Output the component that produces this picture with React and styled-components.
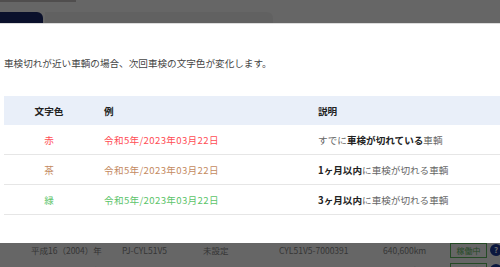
import React from 'react';
import styled, { createGlobalStyle } from 'styled-components';

const GlobalStyle = createGlobalStyle`
  html, body {
    margin: 0;
    padding: 0;
    overflow: hidden;
    background: #fff;
  }
  body {
    font-family: "Noto Sans CJK JP", "Noto Sans", sans-serif;
  }
`;

const vehicles = [
  ['平成16（2004）年', 'PJ-CYL51V5', '未設定', 'CYL51V5-7000391', '640,600km'],
  ['平成27（2015）年', 'EDD-DC16T', '未設定', 'DC16T-105080', '167,204km'],
];

const legend = [
  { name: '赤', color: '#ff4d55', strong: '車検が切れている', before: 'すでに', after: '車輌' },
  { name: '茶', color: '#c48a5f', strong: '1ヶ月以内', before: '', after: 'に車検が切れる車輌' },
  { name: '緑', color: '#5cc46a', strong: '3ヶ月以内', before: '', after: 'に車検が切れる車輌' },
];

function App() {
  return (
    <>
      <GlobalStyle />
      <Page>
        <TopLine />
        <Tabs>
          <Tab active />
          <Tab />
        </Tabs>
        <VehicleList>
          {vehicles.map((r) => (
            <VehicleRow key={r[1]}>
              <span>{r[0]}</span>
              <span>{r[1]}</span>
              <span>{r[2]}</span>
              <span>{r[3]}</span>
              <span>{r[4]}</span>
              <StatusBtn>稼働中</StatusBtn>
              <HelpDot>?</HelpDot>
            </VehicleRow>
          ))}
        </VehicleList>
      </Page>

      <Overlay />

      <Modal>
        <Intro>車検切れが近い車輌の場合、次回車検の文字色が変化します。</Intro>
        <Legend>
          <HeadCell center>文字色</HeadCell>
          <HeadCell>例</HeadCell>
          <HeadCell>説明</HeadCell>
          {legend.map((l) => (
            <React.Fragment key={l.name}>
              <Cell center color={l.color}>{l.name}</Cell>
              <Cell color={l.color} wide>令和5年/2023年03月22日</Cell>
              <Cell color="#666">
                {l.before}
                <b>{l.strong}</b>
                {l.after}
              </Cell>
            </React.Fragment>
          ))}
        </Legend>
      </Modal>
    </>
  );
}

const Page = styled.div`
  width: 500px;
  height: 267px;
  background: #fff;
`;

const TopLine = styled.div`
  width: 76px;
  height: 2px;
  margin-bottom: 10px;
  background: #c9c2c2;
`;

const Tabs = styled.div`
  display: flex;
  gap: 2px;
  height: 12px;
`;

const Tab = styled.div`
  width: ${(p) => (p.active ? '43px' : '228px')};
  border-radius: 0 6px 0 0;
  background: ${(p) => (p.active ? '#1b2a6b' : '#f3f3f3')};
`;

/* rows under the modal are hidden anyway; only the last two peek out */
const VehicleList = styled.div`
  padding-top: 216px;
  display: flex;
  flex-direction: column;
`;

const VehicleRow = styled.div`
  display: grid;
  grid-template-columns: 91px 81px 76px 104px 67px 40px 20px;
  align-items: center;
  height: 20px;
  padding-left: 31px;
  font-size: 8.5px;
  color: #888;
  white-space: nowrap;
`;

const StatusBtn = styled.span`
  width: 35px;
  height: 13px;
  border: 1px solid #5cb85c;
  color: #5cb85c;
  text-align: center;
  line-height: 13px;
  font-size: 8px;
`;

const HelpDot = styled.span`
  width: 12px;
  height: 12px;
  border-radius: 50%;
  background: #1c3a9c;
  color: #fff;
  font-size: 8px;
  line-height: 12px;
  text-align: center;
  font-weight: bold;
`;

const Overlay = styled.div`
  position: fixed;
  inset: 0;
  background: rgba(0, 0, 0, 0.6);
`;

const Modal = styled.div`
  position: fixed;
  top: 23px;
  left: 0;
  width: 540px;
  height: 220px;
  box-sizing: border-box;
  border-top: 1px solid #dcdcdc;
  background: #fff;
  padding: 32px 0 0 4px;
`;

const Intro = styled.p`
  margin: 0 0 26px;
  font-size: 9.6px;
  line-height: 14px;
  color: #444;
`;

const Legend = styled.div`
  display: grid;
  grid-template-columns: 90px 214px 1fr;
`;

const HeadCell = styled.div`
  height: 29px;
  display: flex;
  align-items: center;
  justify-content: ${(p) => (p.center ? 'center' : 'flex-start')};
  padding-left: ${(p) => (p.center ? '0' : '10px')};
  background: #e9eff9;
  font-size: 9.6px;
  font-weight: bold;
  color: #222;
`;

const Cell = styled.div`
  height: 29px;
  display: flex;
  align-items: center;
  justify-content: ${(p) => (p.center ? 'center' : 'flex-start')};
  padding-left: ${(p) => (p.center ? '0' : '10px')};
  border-bottom: 1px solid #e6e6e6;
  font-size: 9.6px;
  letter-spacing: ${(p) => (p.wide ? '0.35px' : 'normal')};
  color: ${(p) => p.color};
  white-space: nowrap;

  b {
    color: #222;
    font-weight: bold;
  }
`;

export default App;
